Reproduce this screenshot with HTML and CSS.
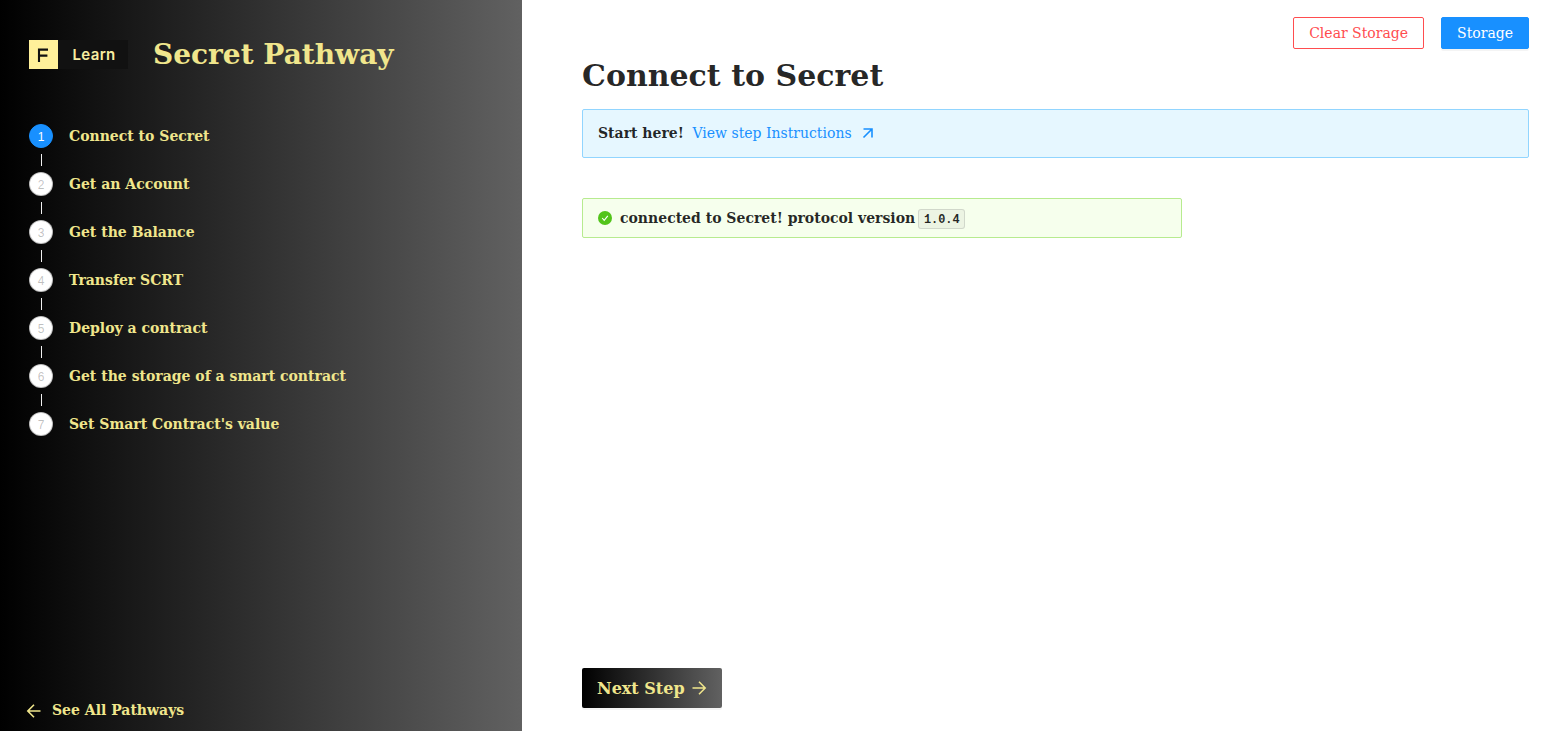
FILE: index.html
```html
<!DOCTYPE html>
<html lang="en">
<head>
<meta charset="utf-8">
<title>Secret Pathway</title>
<link rel="stylesheet" href="styles.css">
</head>
<body>
<div class="layout">
  <aside class="sidebar">
    <header class="brand">
      <div class="logo"><span class="logo-mark"><svg width="12" height="14" viewBox="0 0 12 14"><path d="M2 14V1.6H11M2 7.6H10.4" fill="none" stroke="#111" stroke-width="2.1"/></svg></span><span class="logo-name">Learn</span></div>
      <h2 class="brand-title">Secret Pathway</h2>
    </header>
    <ol class="steps">
      <li class="step active"><span class="step-dot">1</span><span class="step-title">Connect to Secret</span></li>
      <li class="step"><span class="step-dot">2</span><span class="step-title">Get an Account</span></li>
      <li class="step"><span class="step-dot">3</span><span class="step-title">Get the Balance</span></li>
      <li class="step"><span class="step-dot">4</span><span class="step-title">Transfer SCRT</span></li>
      <li class="step"><span class="step-dot">5</span><span class="step-title">Deploy a contract</span></li>
      <li class="step"><span class="step-dot">6</span><span class="step-title">Get the storage of a smart contract</span></li>
      <li class="step"><span class="step-dot">7</span><span class="step-title">Set Smart Contract's value</span></li>
    </ol>
    <a class="all-pathways"><svg width="16" height="16" viewBox="0 0 16 16"><path d="M14.5 9H2M8 2.7L1.8 9l6.2 6.3" fill="none" stroke="currentColor" stroke-width="1.6"/></svg><span>See All Pathways</span></a>
  </aside>
  <main class="content">
    <div class="actions">
      <button class="btn btn-danger">Clear Storage</button>
      <button class="btn btn-primary">Storage</button>
    </div>
    <h1 class="title">Connect to Secret</h1>
    <div class="alert alert-info"><strong>Start here!</strong><a class="link">View step Instructions</a><svg class="link-icon" width="12" height="12" viewBox="0 0 12 12"><path d="M1.5 2H10v8.5M10 2L1.5 10.5" fill="none" stroke="currentColor" stroke-width="1.6"/></svg></div>
    <div class="alert alert-success"><svg class="check" width="14" height="14" viewBox="0 0 14 14"><circle cx="7" cy="7" r="7" fill="#52c41a"/><path d="M4.2 7l2 2.4L9.8 4.8" fill="none" stroke="#fff" stroke-width="1.1"/></svg><strong>connected to Secret! protocol version</strong><code class="version">1.0.4</code></div>
    <button class="next"><span class="next-label">Next Step</span><svg width="16" height="16" viewBox="0 0 16 16"><path d="M1.5 8H14M8 1.7L14.2 8l-6.2 6.3" fill="none" stroke="currentColor" stroke-width="1.5"/></svg></button>
  </main>
</div>
</body>
</html>
```
FILE: styles.css
```css
* { box-sizing: border-box; }
body {
  margin: 0;
  font: 14px/22px "DejaVu Serif", serif;
  color: rgba(0, 0, 0, 0.85);
}
.layout { display: flex; height: 731px; background: #fff; overflow: hidden; }
.sidebar {
  width: 522px;
  display: flex;
  flex-direction: column;
  padding: 36px 29px 10px;
  background: linear-gradient(to right, #000, #616161);
  color: #f0e68c;
  font-weight: 700;
}
.brand { display: flex; align-items: center; gap: 25px; height: 36px; }
.logo { display: flex; width: 99px; height: 29px; background: #111; margin-top: 1px; }
.logo-mark {
  width: 28.5px;
  background: #fff09a;
  display: flex;
  align-items: center;
  justify-content: center;
}
.logo-name {
  padding-left: 15px;
  font: 600 15px/29px Inter, "Liberation Sans", sans-serif;
  letter-spacing: 0.35px;
  color: #f8eda0;
}
.brand-title { margin: 0; padding-top: 2px; font-size: 28px; line-height: 36px; white-space: nowrap; }
.steps { list-style: none; margin: 52px 0 0; padding: 0; }
.step { display: grid; grid-template: 24px 24px / 24px auto; column-gap: 16px; justify-content: start; }
.step-dot {
  width: 24px;
  height: 24px;
  border: 1px solid rgba(0, 0, 0, 0.25);
  border-radius: 50%;
  background: #fff;
  color: rgba(0, 0, 0, 0.25);
  text-align: center;
  font: 400 12px/24px "Liberation Sans", Arial, sans-serif;
}
.active .step-dot { background: #1890ff; border-color: #1890ff; color: #fff; }
.step-title { line-height: 24px; white-space: nowrap; }
.step:not(:last-child)::after {
  content: "";
  width: 1px;
  height: 12px;
  margin: 6px 0 0 12px;
  background: #f0f0f0;
}
.all-pathways { display: flex; align-items: center; gap: 10px; margin: auto 0 0 -3px; }
.content { flex: 1; display: flex; flex-direction: column; padding: 17px 39px 23px 60px; }
.actions { display: flex; justify-content: flex-end; gap: 17px; }
.btn {
  height: 32px;
  padding: 0 15px;
  border: 1px solid;
  border-radius: 2px;
  font: inherit;
  background: #fff;
}
.btn-danger { color: #ff4d4f; border-color: #ff4d4f; }
.btn-primary { color: #fff; background: #1890ff; border-color: #1890ff; box-shadow: 0 2px 0 rgba(0, 0, 0, 0.045); }
.title { margin: 8px 0 15px; font-size: 30px; line-height: 37px; }
.alert { display: flex; align-items: center; border: 1px solid; border-radius: 2px; padding: 0 15px; }
.alert-info { height: 49px; padding-bottom: 2px; background: #e6f7ff; border-color: #91d5ff; }
.link { color: #1890ff; margin-left: 8.5px; }
.link-icon { color: #1890ff; margin-left: 10.8px; }
.alert-success { width: 600px; height: 40px; margin-top: 40px; background: #f6ffed; border-color: #b7eb8f; }
.check { margin-right: 8px; }
.version {
  height: 20px;
  margin: 1px 0 0 3px;
  padding: 1px 4.7px 0;
  border: 1px solid rgba(100, 100, 100, 0.2);
  border-radius: 3px;
  background: rgba(150, 150, 150, 0.1);
  font: 700 11.9px/18px "Liberation Mono", monospace;
}
.next {
  display: flex;
  align-items: center;
  gap: 6px;
  width: 140px;
  height: 40px;
  margin-top: auto;
  padding: 0 15px;
  border: 0;
  border-radius: 2px;
  background: linear-gradient(to right, #000, #616161);
  box-shadow: 0 2px 0 rgba(0, 0, 0, 0.045);
  color: #f0e68c;
  font: 700 16px/24px "DejaVu Serif", serif;
  white-space: nowrap;
}
.next-label { padding-top: 2px; }
.next svg { flex: none; }
```
